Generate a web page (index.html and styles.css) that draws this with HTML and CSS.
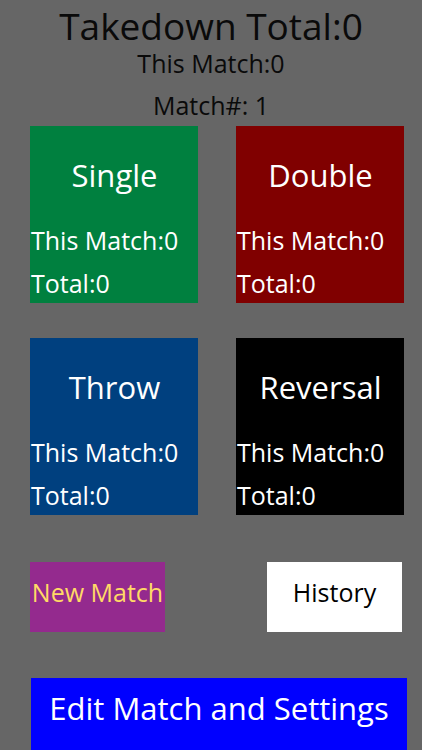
FILE: index.html
```html
<!DOCTYPE html>
<html lang="en">
<head>
    <meta charset="UTF-8">
    <meta name="viewport" content="width=device-width, initial-scale=1.0">
    <title>Takedown Tracker</title>
    <link rel="stylesheet" href="styles.css">
</head>
<body>
    <div class="screen">
        <div class="header">
            <h1 class="grand-total">Takedown Total:0</h1>
            <div class="match-total">This Match:0</div>
            <div class="match-number">Match#: 1</div>
        </div>

        <div class="moves">
            <div class="move single">
                <div class="move-name">Single</div>
                <div class="move-count">This Match:0</div>
                <div class="move-count">Total:0</div>
            </div>
            <div class="move double">
                <div class="move-name">Double</div>
                <div class="move-count">This Match:0</div>
                <div class="move-count">Total:0</div>
            </div>
            <div class="move throw">
                <div class="move-name">Throw</div>
                <div class="move-count">This Match:0</div>
                <div class="move-count">Total:0</div>
            </div>
            <div class="move reversal">
                <div class="move-name">Reversal</div>
                <div class="move-count">This Match:0</div>
                <div class="move-count">Total:0</div>
            </div>
        </div>

        <div class="actions">
            <button class="new-match">New Match</button>
            <button class="history">History</button>
        </div>

        <button class="edit-match">Edit Match and Settings</button>
    </div>
</body>
</html>
```

FILE: styles.css
```css
body {
    margin: 0;
    background-color: #666666;
    font-family: "Open Sans", sans-serif;
    color: #000;
}
.screen {
    width: 422px;
    height: 750px;
    overflow: hidden;
}
.header {
    text-align: center;
    padding-top: 4px;
    color: #0a0a0a;
}
.grand-total {
    margin: 0;
    font-size: 37px;
    font-weight: 400;
    line-height: 44px;
}
.match-total {
    font-size: 25px;
    line-height: 30px;
}
.match-number {
    font-size: 25px;
    line-height: 28px;
    margin-top: 13px;
}
.moves {
    display: grid;
    grid-template-columns: 168px 168px;
    grid-auto-rows: 177px;
    column-gap: 38px;
    row-gap: 35px;
    padding-left: 30px;
    margin-top: 7px;
}
.move {
    color: #fff;
    padding: 29px 0 0 1px;
    box-sizing: border-box;
}
.move-name {
    text-align: center;
    font-size: 31px;
    line-height: 40px;
    margin-bottom: 24px;
}
.move-count {
    font-size: 25px;
    line-height: 43px;
}
.single { background-color: #00803f; }
.double { background-color: #800000; }
.throw { background-color: #00407f; }
.reversal { background-color: #000000; }
.actions {
    display: flex;
    justify-content: space-between;
    margin: 47px 20px 0 30px;
}
button {
    font-family: inherit;
    border: none;
    padding: 0;
    cursor: pointer;
}
.new-match, .history {
    width: 135px;
    height: 70px;
    padding-bottom: 10px;
    font-size: 25px;
}
.new-match {
    background-color: #942a8e;
    color: #ffd966;
}
.history {
    background-color: #fff;
    color: #000;
}
.edit-match {
    display: block;
    width: 376px;
    height: 90px;
    padding-bottom: 30px;
    margin: 46px 0 0 31px;
    background-color: #0000ff;
    color: #fff;
    font-size: 31px;
    text-align: center;
}
```
